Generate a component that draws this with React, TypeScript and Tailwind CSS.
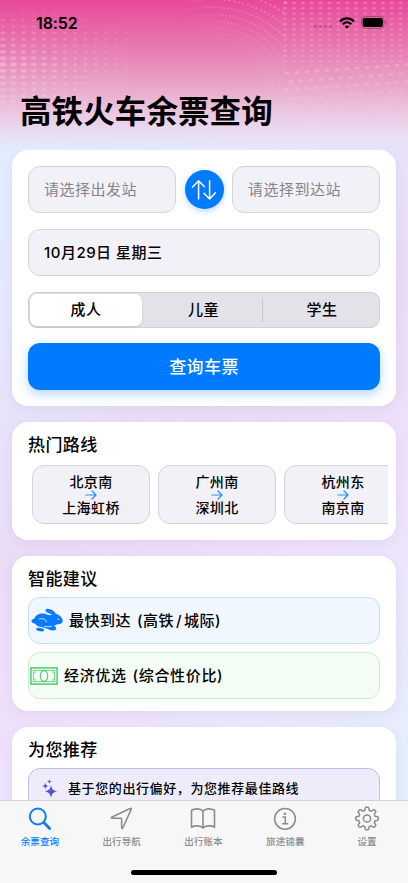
import React from "react";

type Dot = { x: number; y: number; rx: number; ry: number; o: number };

function buildDots(): Dot[] {
  const dots: Dot[] = [];
  // Left halftone grid
  for (let c = 0; c < 13; c++) {
    for (let r = 0; r < 17; r++) {
      const x = 3 + c * 10.3;
      const y = 14 + r * 6.3;
      const fade = Math.max(0, 1 - x / 140) * Math.max(0, 1 - Math.abs(y - 64) / 60);
      if (fade > 0.03) {
        dots.push({ x, y, rx: 1.3 + 2.4 * fade, ry: 0.9 + 1.3 * fade, o: 0.08 + 0.2 * fade });
      }
    }
  }
  // Rings that open out from the middle
  for (let k = 0; k < 10; k++) {
    const rad = 52 + k * 5.2 + k * k * 0.35;
    const n = 74;
    for (let i = 0; i < n; i++) {
      const a = -2.2 + (i / n) * 3.5;
      const x = 212 + rad * Math.cos(a) * 1.05;
      const y = 82 + rad * Math.sin(a) * 0.86;
      if (x < 170 || x > 286 || y < 0 || y > 125) continue;
      const o = Math.min(0.22, 0.1 + k * 0.015) * Math.min(1, (x - 165) / 60) * Math.min(1, (128 - y) / 40);
      dots.push({ x, y, rx: 0.7 + k * 0.11, ry: 0.6 + k * 0.07, o });
    }
  }
  // Right halftone columns
  for (let c = 0; c < 15; c++) {
    for (let r = 0; r < 12; r++) {
      const x = 285 + c * 8.9;
      const y = 3 + r * 5.3;
      dots.push({ x, y, rx: 2.1, ry: 1.2, o: 0.22 * (1 - r / 24) });
    }
  }
  // Loose diagonal dots below the columns
  for (let c = 0; c < 13; c++) {
    for (let r = 0; r < 7; r++) {
      const x = 287 + c * 10 + (r % 2) * 4;
      const y = 73 + r * 8.5 - c * 0.7;
      dots.push({ x, y, rx: 2.3, ry: 1.5, o: 0.2 * (1 - r / 7) });
    }
  }
  return dots;
}

const dots = buildDots();

const SwapIcon = () => (
  <svg width="26" height="22" viewBox="0 0 26 22" fill="none" stroke="white" strokeWidth="1.5" strokeLinecap="round" strokeLinejoin="round">
    <path d="M7.6 20V1.8M1.6 8L7.6 1.8L13.2 7.6M18.6 1.8V20M13 14.2L18.6 20L24.4 13.8" />
  </svg>
);

const ArrowIcon = () => (
  <svg width="12" height="10" viewBox="0 0 12 10" fill="none" stroke="#268cff" strokeWidth="1.2" strokeLinecap="round" strokeLinejoin="round">
    <path d="M.8 5H11M7 1L11 5L7 9" />
  </svg>
);

const RabbitIcon = () => (
  <svg width="32" height="24" viewBox="0 0 32 24" fill="#087bff" className="relative -top-px">
    <path d="M.5 13.3C.3 11.7 1.8 11 3 11.1C4.300 7.500 8 5.300 12 5.600C15 5.800 16.800 7.200 19.300 7.300C19.800 6.700 20.500 6.400 21.300 6.400C18.800 5.900 15.800 4.800 14.800 3.300C13.900 1.700 15 .7 16.700.8C20 .9 23.500 3 25 6.100C28.200 6.600 31.200 9.500 31.700 12.300C32 15 29.400 16.200 26.600 16.300C25.200 16.700 24.400 17.500 23 17.900C24.800 18.500 25.600 20.100 24.900 21.300C24.200 22.300 23.200 22.500 21.800 22.400C19.200 22.300 17.300 21.200 15.500 20.500C14.500 20 13.500 19.500 12.300 19.400L10.600 19C8 18.700 5 17.500 4 15.400C2.200 15.500.8 14.700.5 13.300Z" />
    <path d="M6.500 19.700C8.400 19.600 9.900 20.100 11.400 20.400C13 20.700 13.500 21.600 12.900 22.700C12.300 23.500 10.800 23.500 9.100 23.300C6.700 23 5.300 22.200 5.200 21.100C5.100 20.300 5.700 19.800 6.500 19.700Z" />
    <path d="M8.300 11C12 9.800 15 11.200 15.600 14M13.500 18.600C15.700 18.100 18 19.100 20.400 18.400" fill="none" stroke="#f0f7ff" strokeWidth=".8" strokeLinecap="round" />
    <circle cx="27.100" cy="11.300" r=".8" fill="#f0f7ff" />
  </svg>
);

const BanknoteIcon = () => (
  <svg width="28" height="18" viewBox="0 0 28 18" fill="none" stroke="#51c86f">
    <rect x=".9" y=".9" width="26.200" height="16.200" strokeWidth="1.5" />
    <rect x="3.300" y="3.300" width="21.400" height="11.400" strokeWidth=".8" />
    <ellipse cx="14" cy="9" rx="3.700" ry="5.400" strokeWidth="1.100" />
    <path d="M3.300 5.800H5.600V3.300M3.300 12.200H5.600V14.700M24.700 5.800H22.400V3.300M24.700 12.200H22.400V14.700" strokeWidth=".5" />
  </svg>
);

const SparklesIcon = () => (
  <svg width="16" height="19" viewBox="0 0 16 19" fill="#5753cc">
    <path d="M9 6C9.900 10.200 11 11.500 15.200 12.400C11 13.300 9.900 14.500 9 18.800C8.100 14.500 7 13.300 2.800 12.400C7 11.500 8.100 10.200 9 6Z" />
    <path d="M3.300 3.400C3.700 5.900 4.300 6.600 6.800 7C4.300 7.400 3.700 8.100 3.300 10.600C2.900 8.100 2.300 7.400-.2 7C2.300 6.600 2.900 5.900 3.300 3.400Z" />
    <path d="M7.400.2C7.700 1.800 8.200 2.300 9.900 2.600C8.200 2.900 7.700 3.400 7.400 5C7.100 3.400 6.600 2.900 4.900 2.600C6.600 2.300 7.100 1.800 7.400.2Z" />
  </svg>
);

const SearchIcon = () => (
  <svg width="24" height="24" viewBox="0 0 24 24" fill="none" stroke="#087bff" strokeLinecap="round">
    <circle cx="9.800" cy="9.500" r="8" strokeWidth="2" />
    <path d="M16 15.700L21.700 21.400" strokeWidth="2.800" />
  </svg>
);

const NavIcon = () => (
  <svg width="24" height="24" viewBox="0 0 24 24" fill="none" stroke="#8b8b8e" strokeWidth="1.5" strokeLinejoin="round">
    <path d="M21.200 2.400C21.700 1.400 21.300 1 20.300 1.500L2 10C1.100 10.500 1.300 11.300 2.200 11.300H10.900C11.400 11.300 11.600 11.500 11.600 12V20.700C11.600 21.700 12.400 21.800 12.800 20.900Z" />
  </svg>
);

const BookIcon = () => (
  <svg width="26" height="24" viewBox="0 0 26 24" fill="none" stroke="#8b8b8e" strokeWidth="1.600" strokeLinejoin="round">
    <path d="M13 4C10.500 1.300 5 1.200 1.500 3.300V20.200C5 18.300 10.500 18.400 13 21C15.500 18.400 21 18.300 24.500 20.200V3.300C21 1.200 15.500 1.300 13 4ZM13 4V21" />
  </svg>
);

const InfoIcon = () => (
  <svg width="24" height="24" viewBox="0 0 24 24" fill="none" stroke="#8b8b8e" strokeWidth="1.500" strokeLinecap="round">
    <circle cx="12" cy="11.800" r="10.400" />
    <path d="M10 10H12.300V16.700M9.800 16.800H14.600" />
    <circle cx="11.900" cy="6.700" r="1.300" fill="#8b8b8e" stroke="none" />
  </svg>
);

const gearPath = (() => {
  const pts: string[] = [];
  for (let i = 0; i <= 160; i++) {
    const a = (i / 160) * Math.PI * 2;
    const r = 9.8 + 1.55 * Math.tanh(2.2 * Math.cos(8 * a));
    pts.push(`${(12 + r * Math.cos(a)).toFixed(2)} ${(11.5 + r * Math.sin(a)).toFixed(2)}`);
  }
  return "M" + pts.join("L") + "Z";
})();

const GearIcon = () => (
  <svg width="24" height="24" viewBox="0 0 24 24" fill="none" stroke="#8b8b8e" strokeWidth="1.500" strokeLinejoin="round" overflow="visible">
    <path d={gearPath} />
    <circle cx="12" cy="11.500" r="3.600" />
  </svg>
);

const tabs = [
  { label: "余票查询", icon: <SearchIcon />, active: true },
  { label: "出行导航", icon: <NavIcon />, active: false },
  { label: "出行账本", icon: <BookIcon />, active: false },
  { label: "旅途锦囊", icon: <InfoIcon />, active: false },
  { label: "设置", icon: <GearIcon />, active: false },
];

const routes = [
  ["北京南", "上海虹桥"],
  ["广州南", "深圳北"],
  ["杭州东", "南京南"],
];

const card = "rounded-[16px] bg-white px-4 shadow-[0_3px_12px_rgba(90,60,130,0.07)]";
const field = "flex h-[47px] items-center rounded-[12px] border border-[#d4d3da] bg-[#f2f1f7] px-[15px] pt-[2px] text-[15px] tracking-[0.5px]";
const heading = "h-[27px] text-[17px] leading-[27px] font-medium tracking-[0.4px]";

export default function App() {
  return (
    <div className="relative flex h-[883px] w-[408px] flex-col overflow-hidden bg-[linear-gradient(145deg,#dfefff_0%,#e5e9fd_24%,#eadcf5_48%,#efe1fb_65%,#e5eefb_88%)] font-['Inter','Noto_Sans_CJK_SC',sans-serif] text-black">
      <div className="absolute inset-x-0 top-0 h-[150px] bg-[linear-gradient(180deg,#e8489a_0%,#e873ac_27%,#e99fc5_53%,#ebc8e0_76%,#e9dff5_90%,rgba(230,232,252,0)_100%)]">
        <svg width="408" height="150" fill="white">
          {dots.map((d, i) => (
            <ellipse key={i} cx={d.x} cy={d.y} rx={d.rx} ry={d.ry} opacity={d.o} />
          ))}
        </svg>
      </div>

      <header className="relative h-[150px] shrink-0">
        <div className="flex h-[45px] items-center justify-between pr-[21px] pl-[36px]">
          <span className="text-[16px] font-semibold tracking-[-0.1px]">18:52</span>
          <div className="flex items-center">
            <div className="mt-[7px] mr-[7px] flex gap-[2px]">
              {[0, 1, 2, 3].map((i) => (
                <i key={i} className="size-[3px] rounded-[1px] bg-[#9e5279]/60" />
              ))}
            </div>
            <svg width="16" height="12" viewBox="0 0 16 12" fill="none" stroke="black" strokeWidth="2.100">
              <path d="M1 4.400C5 .4 11 .4 15 4.400M3.700 7.200C6.200 4.800 9.800 4.800 12.300 7.200" />
              <path d="M8 11.700L5.700 9.400C7 8.200 9 8.200 10.300 9.400Z" fill="black" stroke="none" />
            </svg>
            <svg className="ml-[6px]" width="26" height="13" viewBox="0 0 26 13">
              <rect x=".5" y=".5" width="22.500" height="12" rx="3.700" fill="none" stroke="#8b4164" strokeOpacity=".7" />
              <rect x="1.700" y="1.900" width="20.200" height="9.200" rx="2.300" />
              <path d="M24.200 4.500V8.500Q25.600 8 25.600 6.500T24.200 4.500" fill="#8b4164" fillOpacity=".7" />
            </svg>
          </div>
        </div>
        <h1 className="mt-[44px] ml-5 text-[31.5px] leading-[46px] font-bold tracking-[0.1px] whitespace-nowrap">高铁火车余票查询</h1>
      </header>

      <main className="relative flex h-[650px] shrink-0 flex-col gap-4 overflow-hidden px-3">
        <section className={`${card} h-[256px] shrink-0 pt-4`}>
          <div className="flex items-center justify-between">
            <div className={`${field} w-[148px] text-[#858489]`}>请选择出发站</div>
            <button className="flex size-[39px] items-center justify-center rounded-full bg-[#007aff] shadow-[0_2px_6px_rgba(0,122,255,0.3)]">
              <SwapIcon />
            </button>
            <div className={`${field} w-[148px] text-[#858489]`}>请选择到达站</div>
          </div>
          <div className={`${field} mt-4 font-medium`}>10月29日 星期三</div>
          <div className="mt-4 flex h-9 rounded-[9px] border border-[#d0d0d5] bg-[#e3e2e8] text-[15px] font-medium tracking-[0.4px]">
            <div className="my-px ml-px flex w-[112px] items-center justify-center rounded-[7px] bg-white pt-px shadow-[0_1px_3px_rgba(0,0,0,0.12)]">成人</div>
            <div className="flex flex-1 items-center justify-center pt-px pl-[3px]">儿童</div>
            <div className="my-auto h-[23px] w-px bg-[#c7c6cc]" />
            <div className="flex w-[116px] items-center justify-center pt-px pl-[2px]">学生</div>
          </div>
          <button className="mt-[15px] flex h-[47px] w-full items-center justify-center rounded-[12px] bg-[#007aff] pt-[2px] text-[17px] font-medium tracking-[0.4px] text-white shadow-[0_4px_11px_rgba(0,122,255,0.3)]">查询车票</button>
        </section>

        <section className={`${card} h-[118px] shrink-0 pt-[10px] pr-2`}>
          <h2 className={heading}>热门路线</h2>
          <div className="mt-[6px] flex gap-2 overflow-hidden pl-1">
            {routes.map(([from, to]) => (
              <div key={from} className="flex h-[59px] w-[118px] shrink-0 flex-col items-center rounded-[12px] border border-[#d4d3da] bg-[#f2f1f7] pt-[6px] text-[14px] font-medium tracking-[0.4px]">
                <span className="h-[18px] leading-[20px]">{from}</span>
                <ArrowIcon />
                <span className="h-[18px] leading-[15px]">{to}</span>
              </div>
            ))}
          </div>
        </section>

        <section className={`${card} h-[155px] shrink-0 pt-[10px]`}>
          <h2 className={heading}>智能建议</h2>
          <div className="mt-1 flex h-[47px] items-center gap-[6px] rounded-[12px] border border-[#c5def7] bg-[#f0f7ff] pl-[2px] text-[15px] font-medium tracking-[0.5px]">
            <RabbitIcon />
            <span className="pt-[2px]">最快到达<span className="ml-[6px]">(</span>高铁<span className="mx-[2px]">/</span>城际)</span>
          </div>
          <div className="mt-2 flex h-[47px] items-center gap-[6px] rounded-[12px] border border-[#cdebd6] bg-[#f3fcf5] pl-[1px] text-[15px] font-medium tracking-[0.65px]">
            <BanknoteIcon />
            <span className="pt-[2px]">经济优选<span className="ml-[6px]">(</span>综合性价比)</span>
          </div>
        </section>

        <section className={`${card} h-[160px] shrink-0 pt-[10px]`}>
          <h2 className={heading}>为您推荐</h2>
          <div className="mt-1 flex h-[90px] gap-[10px] rounded-[12px] border border-[#c1bbed] bg-[#eeecfa] pt-[10px] pl-[13px]">
            <SparklesIcon />
            <span className="-mt-px h-5 text-[13px] leading-5 font-medium tracking-[0.6px] whitespace-nowrap">基于您的出行偏好，为您推荐最佳路线</span>
          </div>
        </section>
      </main>

      <nav className="relative h-[83px] shrink-0 border-t border-[#d4d3d9] bg-[#f7f7f8] pt-[6px]">
        <div className="-ml-px grid grid-cols-5">
          {tabs.map((t) => (
            <div key={t.label} className={`flex flex-col items-center text-[9.5px] leading-[15px] font-medium tracking-[0.1px] ${t.active ? "text-[#087bff]" : "text-[#8b8b8e]"}`}>
              {t.icon}
              <span className="mt-[3px]">{t.label}</span>
            </div>
          ))}
        </div>
        <div className="mx-auto mt-[21px] h-[5px] w-[146px] rounded-full bg-black" />
      </nav>
    </div>
  );
}
